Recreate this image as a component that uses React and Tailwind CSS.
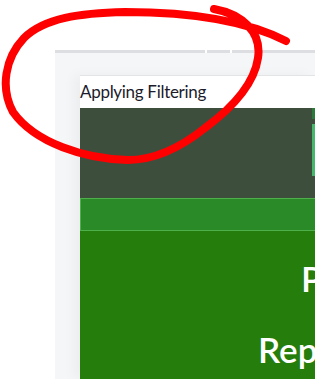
import React from 'react';

const Scribble = () => (
    <svg className="absolute left-0 top-0 pointer-events-none" width="315" height="379" viewBox="0 0 315 379">
        <path
            d="M 214 9 C 242 14, 262 32, 258 58 C 254 85, 232 108, 205 128 C 180 148, 155 160, 128 160 C 85 159, 35 143, 13 112 C 0 88, 5 58, 24 38 C 44 18, 80 13, 125 12 C 185 12, 245 20, 286 41"
            fill="none"
            stroke="#ff0000"
            strokeWidth="8"
            strokeLinecap="round"
            strokeLinejoin="round"
        />
    </svg>
);

const App = () => {
    return (
        <div className="relative w-[315px] h-[379px] overflow-hidden bg-white font-['Lato','Liberation_Sans',sans-serif]">
            <div className="pt-[50px] pl-[55px] h-full flex flex-col">
                <div className="flex h-[3px] shrink-0">
                    <div className="w-[150px] bg-[#dcdee1]" />
                    <div className="w-[2px] bg-white" />
                    <div className="w-[23px] bg-[#dcdee1]" />
                    <div className="w-[2px] bg-white" />
                    <div className="flex-1 bg-[#dcdee1]" />
                </div>
                <div className="flex-1 bg-[#f5f6f7] pt-[22px] pl-[25px]">
                    <div className="h-full bg-white border-t border-[#e3e4e6] shadow-[-6px_0_12px_rgba(0,0,0,0.04)] flex flex-col">
                        <div className="h-[32px] shrink-0 flex items-center text-[17px] text-[#1c1c2c] tracking-[-0.3px]">
                            Applying Filtering
                        </div>
                        <div className="h-[90px] shrink-0 bg-[#3d4f3c] flex justify-end">
                            <div className="w-[3px] flex flex-col">
                                <div className="h-[11px] bg-[#2b7a3b]" />
                                <div className="h-[5px]" />
                                <div className="h-[52px] bg-[#46b86c]" />
                            </div>
                        </div>
                        <div className="h-[33px] shrink-0 bg-[#2a8a28] border-t border-b border-l border-[#4db04a]" />
                        <div className="flex-1 bg-[#257d0b] text-white font-semibold text-[35px] leading-none overflow-hidden">
                            <div className="pt-[30px] pl-[221px] whitespace-nowrap">Photo</div>
                            <div className="pt-[36px] pl-[178px] whitespace-nowrap">Reporting</div>
                        </div>
                    </div>
                </div>
            </div>
            <Scribble />
        </div>
    );
};

export default App;
